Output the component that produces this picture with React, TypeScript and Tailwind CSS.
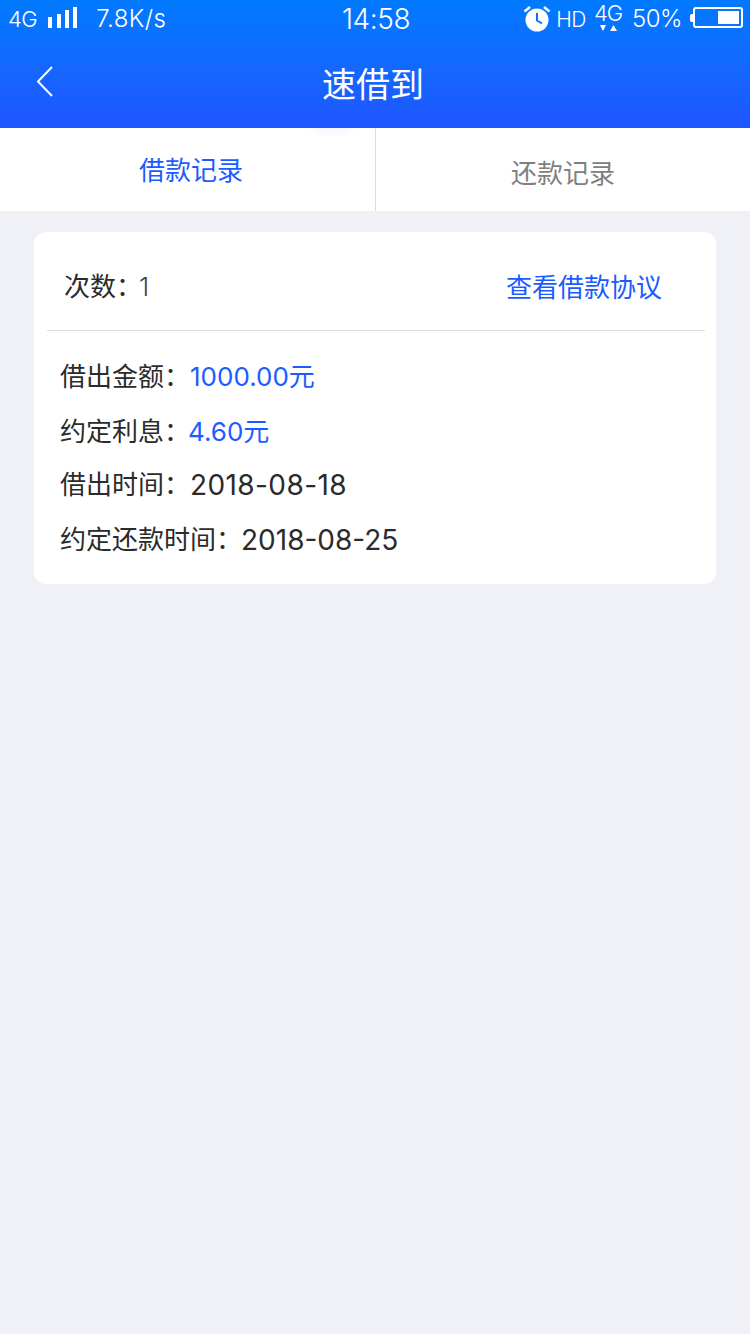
import React from "react";

const cjk = "font-['Inter','Noto_Sans_CJK_SC',sans-serif]";

const InfoRow = ({ label, value, className }: { label: string; value: string; className: string }) => (
  <div className="flex h-[55px] items-center text-[26px] leading-none text-[#2b2b2b] [&:nth-child(3)]:-mt-[2px]">
    <span>{label}：</span>
    <span className={className}>{value}</span>
  </div>
);

const StatusBar = () => (
  <div className="flex h-[38px] items-center pl-[8px] pr-[7px] text-white">
    <div className="flex w-[334px] items-center text-[24px] leading-none">
      <span className="text-[22px] font-light tracking-[-0.5px]">4G</span>
      <svg width="29" height="21" viewBox="0 0 29 21" className="mb-[3px] ml-[11px]" fill="#fff">
        <rect x="0" y="10" width="4" height="11" />
        <rect x="9" y="7" width="4" height="14" />
        <rect x="17" y="3" width="4" height="18" />
        <rect x="25" y="0" width="4" height="21" />
      </svg>
      <span className="ml-[19px] text-[24px] font-light tracking-[0.4px]">7.8K/s</span>
    </div>
    <span className="text-[28px] font-light leading-none tracking-[-0.4px]">14:58</span>
    <div className="flex flex-1 items-center justify-end text-[24px] font-light leading-none">
      <svg width="28" height="28" viewBox="0 0 28 28" fill="none" className="mb-[3px]">
        <circle cx="14" cy="16" r="11.5" fill="#fff" />
        <path d="M14 9v7.5l5 3" stroke="#0a70ff" strokeWidth="2" fill="none" />
        <path d="M1.5 7.5 7 3M26.5 7.5 21 3" stroke="#fff" strokeWidth="2.5" />
      </svg>
      <span className="ml-[5px] text-[21px] tracking-[-0.5px]">HD</span>
      <div className="relative ml-[8px] h-[32px] w-[28px]">
        <span className="absolute left-0 top-[-3px] text-[22px] leading-[26px] tracking-[-1px]">4G</span>
        <svg width="18" height="8" viewBox="0 0 18 8" className="absolute left-[6px] top-[21px]" fill="#fff">
          <path d="M0 1h6L3 7zM10 7h7l-3.5-6z" />
        </svg>
      </div>
      <span className="ml-[10px] text-[24px] tracking-[-0.5px]">50%</span>
      <div className="mb-[3px] ml-[8px] h-[8px] w-[3px] rounded-l-[2px] bg-white" />
      <div className="mb-[3px] flex h-[21px] w-[50px] justify-end rounded-[3px] border-2 border-white p-[2px]">
        <div className="h-full w-[21px] bg-white" />
      </div>
    </div>
  </div>
);

export default function App() {
  return (
    <div className={`flex min-h-[1334px] flex-col bg-[#f0f1f6] ${cjk}`}>
      <header className="h-[128px] bg-gradient-to-b from-[#007aff] to-[#1f55ff]">
        <StatusBar />
        <div className="relative flex h-[90px] items-center justify-center pr-[4px] pt-[4px]">
          <svg width="20" height="32" viewBox="0 0 20 32" className="absolute left-[35px] top-[27px]" fill="none">
            <path d="M17 2 3 16.5 17 31" stroke="#fff" strokeWidth="2" />
          </svg>
          <span className="text-[34px] leading-none text-white">速借到</span>
        </div>
      </header>

      <div className="relative flex h-[83px] overflow-hidden bg-white text-[26px]">
        <div className="absolute left-[312px] top-[-4px] h-[10px] w-[40px] rounded-full bg-[#f8f9ff] blur-[3px]" />
        <div className="flex w-[376px] items-center justify-center border-r border-[#dddddd] pl-[7px] pt-[2px] text-[#1b5bff]">借款记录</div>
        <div className="flex w-[374px] items-center justify-center pt-[7px] text-[#808080]">还款记录</div>
      </div>

      <div className="mx-[34px] mt-[21px] rounded-[12px] bg-white pl-[13px] pr-[11px]">
        <div className="flex h-[99px] items-center justify-between border-b border-[#dddddd] pl-[17px] pr-[43px] pt-[12px] text-[26px]">
          <span className="mb-[2px] text-[#2b2b2b]">
            次数<span className="tracking-[-3px]">：</span>
            <span className="font-light text-[#444444]">1</span>
          </span>
          <span className="text-[#1b5bff]">查看借款协议</span>
        </div>
        <div className="pb-[17px] pl-[13px] pt-[18px]">
          <InfoRow label="借出金额" value="1000.00元" className="text-[#1b5bff]" />
          <InfoRow label="约定利息" value="4.60元" className="-ml-[2px] text-[#1b5bff]" />
          <InfoRow label="借出时间" value="2018-08-18" className="text-[28px] tracking-[0.4px]" />
          <InfoRow label="约定还款时间" value="2018-08-25" className="-ml-[1px] text-[28px]" />
        </div>
      </div>
    </div>
  );
}
